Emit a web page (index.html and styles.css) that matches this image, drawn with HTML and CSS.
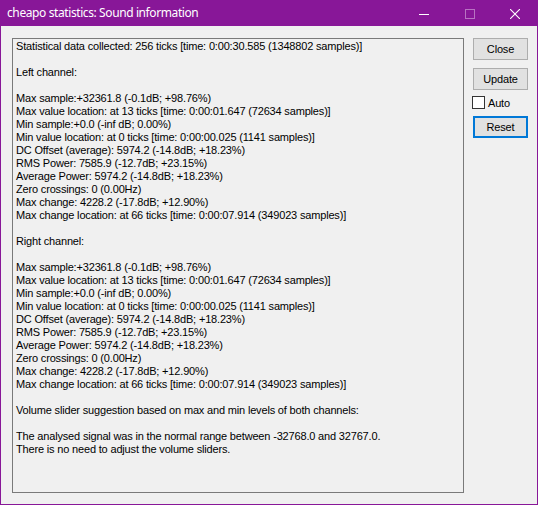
FILE: index.html
```html
<!DOCTYPE html>
<html>
<head>
<meta charset="utf-8">
<title>cheapo statistics: Sound information</title>
<link rel="stylesheet" href="styles.css">
</head>
<body>
<div class="window">
  <div class="titlebar">
    <span class="title">cheapo statistics: Sound information</span>
    <div class="caption-buttons">
      <div class="cap-btn min"><svg width="10" height="10" viewBox="0 0 10 10"><path d="M0 5.5H10" stroke="#fff" stroke-width="1"/></svg></div>
      <div class="cap-btn max"><svg width="10" height="10" viewBox="0 0 10 10"><rect x="0.5" y="0.5" width="9" height="9" fill="none" stroke="#b873c2" stroke-width="1"/></svg></div>
      <div class="cap-btn close"><svg width="10" height="10" viewBox="0 0 10 10"><path d="M0 0L10 10M10 0L0 10" stroke="#fff" stroke-width="1.1"/></svg></div>
    </div>
  </div>
  <div class="client">
    <div class="report">
      <p>Statistical data collected: 256 ticks [time: 0:00:30.585 (1348802 samples)]</p>
      <p class="gap"></p>
      <p>Left channel:</p>
      <p class="gap"></p>
      <p>Max sample:+32361.8 (-0.1dB; +98.76%)</p>
      <p>Max value location: at 13 ticks [time: 0:00:01.647 (72634 samples)]</p>
      <p>Min sample:+0.0 (-inf dB; 0.00%)</p>
      <p>Min value location: at 0 ticks [time: 0:00:00.025 (1141 samples)]</p>
      <p>DC Offset (average): 5974.2 (-14.8dB; +18.23%)</p>
      <p>RMS Power: 7585.9 (-12.7dB; +23.15%)</p>
      <p>Average Power: 5974.2 (-14.8dB; +18.23%)</p>
      <p>Zero crossings: 0 (0.00Hz)</p>
      <p>Max change: 4228.2 (-17.8dB; +12.90%)</p>
      <p>Max change location: at 66 ticks [time: 0:00:07.914 (349023 samples)]</p>
      <p class="gap"></p>
      <p>Right channel:</p>
      <p class="gap"></p>
      <p>Max sample:+32361.8 (-0.1dB; +98.76%)</p>
      <p>Max value location: at 13 ticks [time: 0:00:01.647 (72634 samples)]</p>
      <p>Min sample:+0.0 (-inf dB; 0.00%)</p>
      <p>Min value location: at 0 ticks [time: 0:00:00.025 (1141 samples)]</p>
      <p>DC Offset (average): 5974.2 (-14.8dB; +18.23%)</p>
      <p>RMS Power: 7585.9 (-12.7dB; +23.15%)</p>
      <p>Average Power: 5974.2 (-14.8dB; +18.23%)</p>
      <p>Zero crossings: 0 (0.00Hz)</p>
      <p>Max change: 4228.2 (-17.8dB; +12.90%)</p>
      <p>Max change location: at 66 ticks [time: 0:00:07.914 (349023 samples)]</p>
      <p class="gap"></p>
      <p>Volume slider suggestion based on max and min levels of both channels:</p>
      <p class="gap"></p>
      <p>The analysed signal was in the normal range between -32768.0 and 32767.0.</p>
      <p>There is no need to adjust the volume sliders.</p>
    </div>
    <div class="side">
      <button class="btn">Close</button>
      <button class="btn update">Update</button>
      <label class="check"><span class="box"></span><span>Auto</span></label>
      <button class="btn reset">Reset</button>
    </div>
  </div>
</div>
</body>
</html>
```

FILE: styles.css
```css
html, body {
  margin: 0;
  padding: 0;
  background: #ffffff;
}

.window {
  width: 538px;
  height: 505px;
  box-sizing: border-box;
  border: 1px solid #881798;
  border-top: 0;
  background: #f0f0f0;
  display: flex;
  flex-direction: column;
}

.titlebar {
  height: 26px;
  flex: none;
  background: #881798;
  display: flex;
  align-items: center;
}

.title {
  flex: 1;
  padding-left: 6px;
  color: #ffffff;
  font-family: "Noto Sans", sans-serif;
  font-size: 12px;
  letter-spacing: -0.4px;
  line-height: 16px;
  white-space: nowrap;
}

.caption-buttons {
  display: flex;
  height: 26px;
}

.cap-btn {
  width: 46px;
  height: 26px;
  display: flex;
  align-items: center;
  justify-content: center;
}

.cap-btn svg {
  display: block;
  margin-top: 1px;
}

.cap-btn.close {
  width: 44px;
}

.client {
  flex: 1;
  display: flex;
  padding: 12px 0 11px 11px;
  font-family: "Liberation Sans", Arial, sans-serif;
  font-size: 11px;
  letter-spacing: -0.17px;
  color: #000000;
}

.report {
  width: 452px;
  box-sizing: border-box;
  border: 1px solid #7a7a7a;
  padding: 1px 3px;
  overflow: hidden;
}

.report p {
  margin: 0;
  height: 13px;
  line-height: 13px;
  white-space: nowrap;
}

.side {
  margin-left: 9px;
  display: flex;
  flex-direction: column;
  align-items: flex-start;
}

.btn {
  width: 55px;
  height: 22px;
  box-sizing: border-box;
  border: 1px solid #adadad;
  background: #e1e1e1;
  font-family: "Liberation Sans", Arial, sans-serif;
  font-size: 11px;
  letter-spacing: -0.17px;
  color: #000000;
  padding: 0;
  margin: 0;
}

.btn.update {
  margin-top: 8px;
}

.btn.reset {
  margin-top: 7px;
  border: 2px solid #0078d7;
}

.check {
  margin-top: 6px;
  margin-left: -1px;
  display: flex;
  align-items: center;
  height: 13px;
}

.check .box {
  width: 13px;
  height: 13px;
  box-sizing: border-box;
  border: 1px solid #333333;
  background: #ffffff;
  margin-right: 3px;
}
```
